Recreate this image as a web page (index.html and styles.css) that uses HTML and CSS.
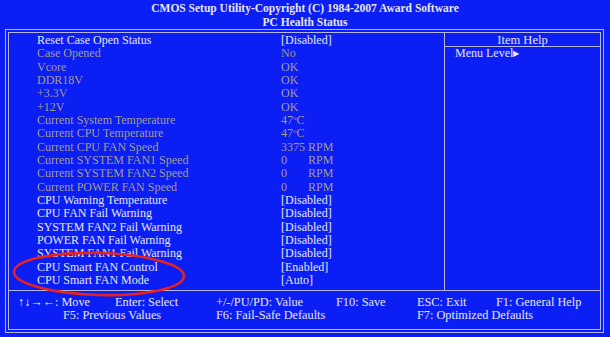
FILE: index.html
```html
<!DOCTYPE html>
<html lang="en">
<head>
  <meta charset="UTF-8">
  <title>PC Health Status</title>
  <link rel="stylesheet" href="styles.css">
</head>
<body>
  <header class="header">
    <div class="title">CMOS Setup Utility-Copyright (C) 1984-2007 Award Software</div>
    <div class="title">PC Health Status</div>
  </header>
  <div class="frame">
    <div class="box">
      <!-- список параметров -->
      <section class="main">
        <div class="row"><span class="label">Reset Case Open Status</span><span>[Disabled]</span></div>
        <div class="row off"><span class="label">Case Opened</span><span>No</span></div>
        <div class="row off"><span class="label">Vcore</span><span>OK</span></div>
        <div class="row off"><span class="label">DDR18V</span><span>OK</span></div>
        <div class="row off"><span class="label">+3.3V</span><span>OK</span></div>
        <div class="row off"><span class="label">+12V</span><span>OK</span></div>
        <div class="row off"><span class="label">Current System Temperature</span><span>47<sup class="deg">o</sup>C</span></div>
        <div class="row off"><span class="label">Current CPU Temperature</span><span>47<sup class="deg">o</sup>C</span></div>
        <div class="row off"><span class="label">Current CPU FAN Speed</span><span>3375 RPM</span></div>
        <div class="row off"><span class="label">Current SYSTEM FAN1 Speed</span><span><span class="num">0</span>RPM</span></div>
        <div class="row off"><span class="label">Current SYSTEM FAN2 Speed</span><span><span class="num">0</span>RPM</span></div>
        <div class="row off"><span class="label">Current POWER FAN Speed</span><span><span class="num">0</span>RPM</span></div>
        <div class="row"><span class="label">CPU Warning Temperature</span><span>[Disabled]</span></div>
        <div class="row"><span class="label">CPU FAN Fail Warning</span><span>[Disabled]</span></div>
        <div class="row"><span class="label">SYSTEM FAN2 Fail Warning</span><span>[Disabled]</span></div>
        <div class="row"><span class="label">POWER FAN Fail Warning</span><span>[Disabled]</span></div>
        <div class="row"><span class="label">SYSTEM FAN1 Fail Warning</span><span>[Disabled]</span></div>
        <div class="row"><span class="label">CPU Smart FAN Control</span><span>[Enabled]</span></div>
        <div class="row"><span class="label">CPU Smart FAN Mode</span><span>[Auto]</span></div>
      </section>
      <!-- справка -->
      <aside class="help">
        <div class="help-title">Item Help</div>
        <div class="help-text">Menu Level<span class="arrow">&#9654;</span></div>
      </aside>
      <footer class="footer">
        <div class="keys keys-top">
          <span>&uarr;&darr;&rarr;&larr;: Move</span>
          <span>Enter: Select</span>
          <span>+/-/PU/PD: Value</span>
          <span>F10: Save</span>
          <span>ESC: Exit</span>
          <span>F1: General Help</span>
        </div>
        <div class="keys keys-bottom">
          <span>F5: Previous Values</span>
          <span>F6: Fail-Safe Defaults</span>
          <span>F7: Optimized Defaults</span>
        </div>
      </footer>
    </div>
    <svg class="mark" width="200" height="60" viewBox="0 0 200 60">
      <ellipse cx="94" cy="28" rx="85" ry="21" fill="none" stroke="#e8231e" stroke-width="2.6" transform="rotate(1.5 94 28)"/>
    </svg>
  </div>
</body>
</html>
```

FILE: styles.css
```css
/* BIOS screen */
body {
  margin: 0;
  width: 610px;
  height: 337px;
  background-color: #0b1ef4;
  color: #e6e6ee;
  font-family: "Liberation Serif", "Times New Roman", serif;
  font-size: 12px;
  overflow: hidden;
}
.header {
  padding-top: 1px;
  text-align: center;
  font-weight: bold;
  font-size: 11.5px;
  line-height: 14px;
}
.frame {
  position: relative;
  margin-left: 5px;
  width: 593px;
  border: 1px solid #b4b4dc;
  padding: 2px;
}
.box {
  border: 1px solid #b4b4dc;
  display: grid;
  grid-template-columns: 436px 1fr;
  grid-template-rows: 258px 38px;
}
.main {
  border-right: 1px solid #b4b4dc;
  padding-top: 1px;
  border-bottom: 1px solid #b4b4dc;
}
.row {
  display: grid;
  grid-template-columns: 244px auto;
  padding-left: 28px;
  line-height: 13.33px;
  white-space: nowrap;
}
.row.off {
  color: #a39d8b;
}
.deg {
  font-size: 7px;
  vertical-align: 4px;
  line-height: 0;
}
.num {
  display: inline-block;
  width: 27px;
}
.help {
  border-bottom: 1px solid #b4b4dc;
}
.help-title {
  height: 13px;
  line-height: 14px;
  text-align: center;
  font-size: 12.5px;
  border-bottom: 1px solid #b4b4dc;
}
.help-text {
  padding-left: 10px;
  line-height: 13px;
}
.arrow {
  font-size: 8px;
  vertical-align: 1px;
}
.footer {
  grid-column: 1 / 3;
  padding-top: 5px;
  font-size: 12.3px;
}
.keys {
  display: grid;
  line-height: 13px;
  white-space: nowrap;
}
.keys-top {
  grid-template-columns: 97px 101px 120px 81px 79px auto;
  padding-left: 9px;
}
.keys-bottom {
  grid-template-columns: 153px 201px auto;
  padding-left: 54px;
}
.mark {
  position: absolute;
  left: -1px;
  top: 216px;
}
```
